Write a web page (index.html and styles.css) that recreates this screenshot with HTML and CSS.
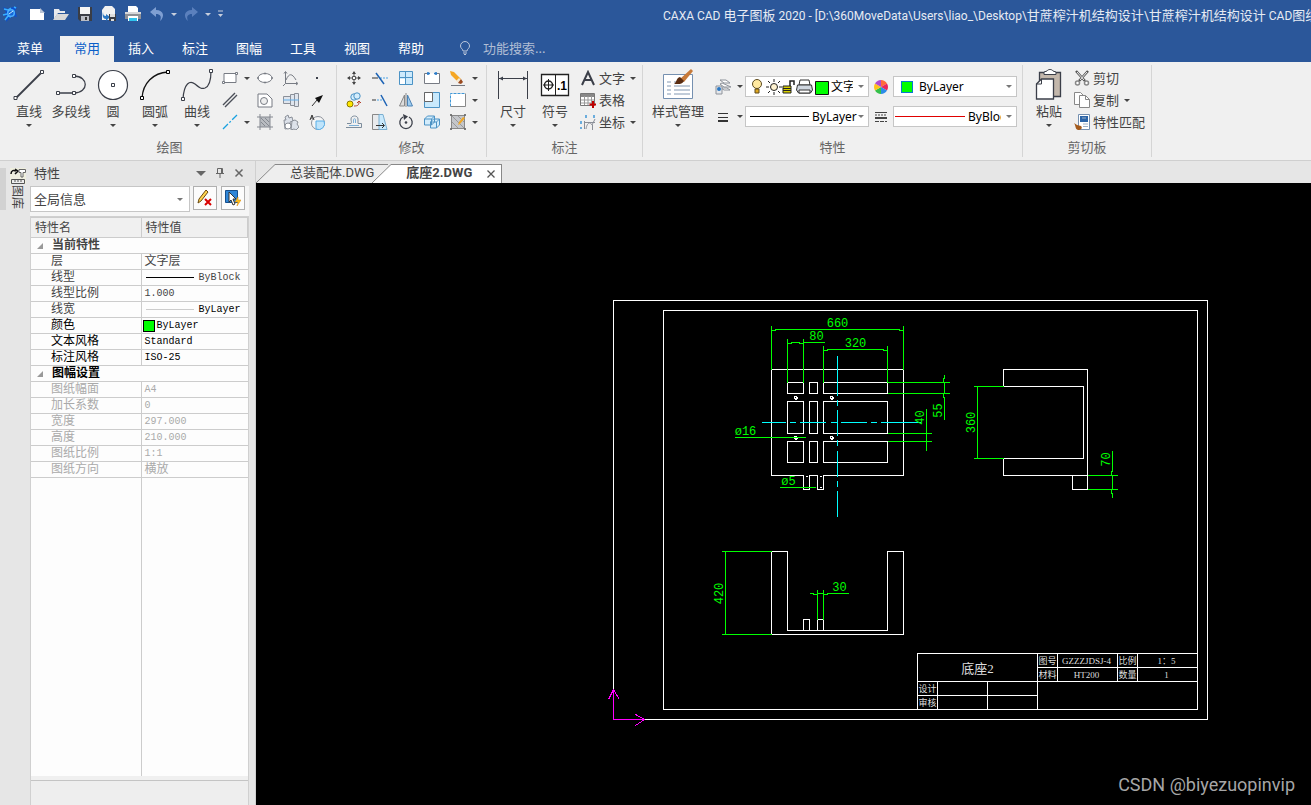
FILE: index.html
```html
<!DOCTYPE html>
<html lang="zh-CN">
<head>
    <meta charset="UTF-8">
    <meta name="viewport" content="width=device-width, initial-scale=1.0">
    <title>CAXA CAD 电子图板 2020</title>
    <link rel="stylesheet" href="styles.css">
</head>
<body>
    <header class="titlebar">
        <div class="quick">
            <svg class="ic logo" viewBox="0 0 16 16"><path d="M1 1l5 2 5-2 4 0-2 4 2 6-4-1-3 2-4 4 1-5-3-2 2-3z" fill="#0a4fd0"/><path d="M2 3l4 1 3-2M1 9l4-1M3 14l3-4 3 1M12 1l2 1" stroke="#39b0ff" stroke-width="1.500" fill="none"/><circle cx="9" cy="7" r="3.300" fill="#1668d8" stroke="#4cb0ff" stroke-width="1.500"/><path d="M7 8l4-3" stroke="#cdeeff" fill="none"/></svg>
            <button aria-label="新建"><svg class="ic" viewBox="0 0 16 16"><path d="M1 3h10l4 4v7H1z" fill="#fff"/><path d="M11 2v5h5z" fill="#b9c4d6"/></svg></button>
            <button aria-label="打开"><svg class="ic" viewBox="0 0 16 16"><path d="M1 13V3h5l1 2h5v2H5z" fill="#e8eaee"/><path d="M4 8h12l-4 6H0z" fill="#d8d8d8"/></svg></button>
            <button aria-label="保存"><svg class="ic" viewBox="0 0 16 16"><path d="M1 1h14v14H3l-2-2z" fill="#3a3d45"/><path d="M3 1h10v7H3z" fill="#f4f4f4"/><path d="M4 10h8v5H4z" fill="#b9bcc4"/><path d="M8 11h2v3H8z" fill="#333"/></svg></button>
            <button aria-label="另存为"><svg class="ic" viewBox="0 0 16 16"><path d="M4 0h7l3 3v11H1V4z" fill="#f1f1f1"/><path d="M2 6c0 3 1 4 3 4V8l4 3-4 4v-2c-3 0-4-3-3-7z" fill="#2b78c4"/><path d="M8 8h7v7H8z" fill="#3a3d45"/><path d="M9 8h5v3H9zM10 13h3v2h-3z" fill="#ddd"/></svg></button>
            <button aria-label="打印"><svg class="ic" viewBox="0 0 16 16"><path d="M3 0h8l2 2v4H3z" fill="#fff"/><path d="M0 6h16v7H0z" fill="#8d9096"/><path d="M0 6h16v2H0z" fill="#d6d7da"/><path d="M3 10h10v5H3z" fill="#fff"/><path d="M4 12h8v3H4z" fill="#2fc3ee"/></svg></button>
            <button aria-label="撤销"><svg class="ic" viewBox="0 0 16 16"><path d="M1 6l6-5v3c8 0 9 7 4 11 2-5 0-7-4-7v3z" fill="#7f9fd2"/></svg></button>
            <i class="caret light"></i>
            <button aria-label="重做"><svg class="ic" viewBox="0 0 16 16"><path d="M15 6L9 1v3c-8 0-9 7-4 11-2-5 0-7 4-7v3z" fill="#5b80bd"/></svg></button>
            <i class="caret light"></i>
            <svg class="more" viewBox="0 0 7 8"><path d="M1 1h5" stroke="#c8cfdd" stroke-width="1"/><path d="M1 4h5L3.500 7z" fill="#c8cfdd"/></svg>
        </div>
        <div class="app-title">CAXA CAD <span>电子图板</span> 2020 - [D:\360MoveData\Users\liao_\Desktop\<span>甘蔗榨汁机结构设计</span>\<span>甘蔗榨汁机结构设计</span> CAD<span>图纸</span></div>
    </header>
    <nav class="menu">
        <button class="first">菜单</button>
        <button class="active">常用</button>
        <button>插入</button>
        <button>标注</button>
        <button>图幅</button>
        <button>工具</button>
        <button>视图</button>
        <button>帮助</button>
        <label class="search">
            <svg viewBox="0 0 12 14"><path d="M4 10C4 8 1.500 7.500 1.500 5a4.500 4.500 0 0 1 9 0C10.500 7.500 8 8 8 10zM4 12h4M5 13.500h2" fill="none" stroke="#bcc8dc"/></svg>
            <input type="text" placeholder="功能搜索..." aria-label="功能搜索">
        </label>
    </nav>

    <section class="ribbon">
        <!-- draw -->
        <div class="group">
            <div class="tools">
                <button class="big"><svg viewBox="0 0 32 32"><path d="M3 29L29 3" stroke="#3b3f49" stroke-width="1.800"/><path class="node" d="M1 27.500h3v3H1zM27.500 1.500h3v3h-3z"/></svg>直线<i class="caret"></i></button>
                <button class="big"><svg viewBox="0 0 32 32"><path d="M3 24h16c15 0 15-17 0-17" fill="none" stroke="#3b3f49" stroke-width="1.300"/><path class="node" d="M1.500 22.500h3v3h-3zM17.500 22.500h3v3h-3zM17.500 5.500h3v3h-3z"/></svg>多段线</button>
                <button class="big"><svg viewBox="0 0 32 32"><circle cx="16" cy="16" r="14.500" fill="#fff" stroke="#3b3f49" stroke-width="1.200"/><path class="node" d="M14.500 14.500h3v3h-3z"/></svg>圆<i class="caret"></i></button>
                <button class="big"><svg viewBox="0 0 32 32"><path d="M3 29C4 14 14 4 29 3" fill="none" stroke="#111" stroke-width="1.300"/><path class="node black" d="M1.500 27.500h3v3h-3zM27.500 1.500h3v3h-3z"/></svg>圆弧<i class="caret"></i></button>
                <button class="big"><svg viewBox="0 0 32 32"><path d="M2 30C3 14 9 11 14 15c6 5 7 5 10 4 5-2 6-8 6-17" fill="none" stroke="#3b3f49" stroke-width="1.200"/><path class="node" d="M.5 28.500h3v3h-3zM28.500.5h3v3h-3z"/></svg>曲线<i class="caret"></i></button>
                <div class="grid draw-grid">
                    <button aria-label="矩形"><svg class="ic" viewBox="0 0 16 16"><path d="M2 3.500h12v9H2z" fill="#fff" stroke="#777b83"/><path d="M.5 11.500h2v2h-2zM13.500 2.500h2v2h-2z" fill="#fff" stroke="#777b83"/></svg><i class="caret"></i></button>
                    <button aria-label="椭圆"><svg class="ic" viewBox="0 0 16 16"><ellipse cx="8" cy="8" rx="7" ry="4.500" fill="#fff" stroke="#777b83"/><path d="M.5 7.500h1v1h-1zM14.500 7.500h1v1h-1zM7.500 3h1v1h-1zM7.500 12h1v1h-1z" fill="#fff" stroke="#777b83"/></svg></button>
                    <button aria-label="公式曲线"><svg class="ic" viewBox="0 0 16 16"><path d="M2.500 2v11.500H14M1 3.500l1.500-2L4 3.500M13 12l2 1.500-2 1.500M0 16l2.500-2.500M3 10C6 3 9 3 13 10" fill="none" stroke="#777b83"/></svg></button>
                    <button aria-label="点"><svg class="ic" viewBox="0 0 16 16"><path d="M7 7h2v2H7z" fill="#3b3f49"/></svg></button>
                    <button aria-label="平行线"><svg class="ic" viewBox="0 0 16 16"><path d="M1 13L13 1M3 15L15 3" stroke="#4b4f59" stroke-width="1.400"/></svg></button>
                    <button aria-label="局部放大"><svg class="ic" viewBox="0 0 16 16"><path d="M1 2h9l5 5v8H1z" fill="#fff" stroke="#777b83"/><circle cx="7" cy="9" r="3.500" fill="#eee" stroke="#777b83"/></svg></button>
                    <button aria-label="孔轴"><svg class="ic" viewBox="0 0 16 16"><path d="M.5 4.500h7v7h-7zM7.500 2.500h4v11h-4zM11.500 1.500h4v13h-4z" fill="#dfe5ed" stroke="#8b9099"/><path d="M0 8h16" stroke="#62aee8"/></svg></button>
                    <button aria-label="箭头"><svg class="ic" viewBox="0 0 16 16"><path d="M3 14l5-6" stroke="#333"/><path d="M14 3L6 6l4 5z" fill="#111"/></svg></button>
                    <button aria-label="中心线"><svg class="ic" viewBox="0 0 16 16"><path d="M1 15L15 1" stroke="#19a1e0" stroke-width="1.300" stroke-dasharray="7 2 2 2"/></svg><i class="caret"></i></button>
                    <button aria-label="剖面线"><svg class="ic" viewBox="0 0 16 16"><path d="M3 3h10v10H3z" fill="#b9bcc1"/><path d="M3 0v16M13 0v16M0 3h16M0 13h16M4 8l4 4M4 4l8 8M8 4l4 4" stroke="#858991"/></svg></button>
                    <button aria-label="齿轮"><svg class="ic" viewBox="0 0 16 16"><path d="M1 6h2l-1-3 3-2 1 3 3-1 1 4-3 1 1 6-6 1z" fill="#dde2ea" stroke="#8b9099"/><path d="M9 7l3-1 3 2-1 2 2 3-3 3-2-1-3 1z" fill="#dde2ea" stroke="#8b9099"/><circle cx="5" cy="12" r="3" fill="#fff" stroke="#8b9099"/></svg></button>
                    <button aria-label="技术要求"><svg class="ic" viewBox="0 0 16 16"><circle cx="9" cy="9" r="6.500" fill="#f5f5f5" stroke="#8b9099"/><path d="M7 7h8a6 6 0 0 1-8 8z" fill="#bfe4fb" stroke="#58aee8"/><path d="M1 6l2-5 2 5M2 4h2" fill="none" stroke="#333"/></svg></button>
                </div>
            </div>
            <div class="group-name">绘图</div>
        </div>
        <!-- modify -->
        <div class="group">
            <div class="tools">
                <div class="grid modify-grid">
                    <button aria-label="平移"><svg class="ic" viewBox="0 0 16 16"><path d="M8 2v4M8 10v4M2 8h4M10 8h4" stroke="#555"/><path d="M6 4l2-3 2 3zM6 12l2 3 2-3zM4 6L1 8l3 2zM12 6l3 2-3 2z" fill="#444"/><path d="M6.500 6.500h3v3h-3z" fill="#fff" stroke="#555"/></svg></button>
                    <button aria-label="裁剪"><svg class="ic" viewBox="0 0 16 16"><path d="M0 8h6" stroke="#333"/><path d="M8 8h8" stroke="#4aa3e6" stroke-dasharray="2 1"/><path d="M4 3l8 11" stroke="#1b62b5" stroke-width="1.500"/></svg></button>
                    <button aria-label="阵列"><svg class="ic" viewBox="0 0 16 16"><path d="M1 1h14v14H1z" fill="#cdeafc"/><path d="M2 9h5v5H2z" fill="#fff"/><path d="M1.500 1.500h13v13h-13zM7.500 1v14M1 7.500h14" fill="none" stroke="#4c93c5"/></svg></button>
                    <button aria-label="打断"><svg class="ic" viewBox="0 0 16 16"><path d="M3 3.500H.5v10h15v-10H13" fill="#fff" stroke="#777b83"/><path d="M4 2v3M6 3.500H3M12 2v3M10 3.500h3" stroke="#2b7cc9" stroke-width="1.500"/></svg></button>
                    <button aria-label="删除"><svg class="ic" viewBox="0 0 16 16"><path d="M0 1l4 1 7 7-3 3-7-7z" fill="#f5a623"/><path d="M9 8l4 4-3 2-4-3z" fill="#f3e6d2"/><path d="M11 9l2 3-2 2-3-1z" fill="#9a4a20"/><path d="M1 15.500h14" stroke="#777b83"/></svg><i class="caret"></i></button>
                    <button aria-label="复制平移"><svg class="ic" viewBox="0 0 16 16"><circle cx="4" cy="12" r="3" fill="#ffe600" stroke="#8a7a00"/><circle cx="8" cy="5" r="3.200" fill="#d4edfc" stroke="#4c93c5"/><circle cx="11" cy="4" r="3.200" fill="#d4edfc" stroke="#4c93c5"/><path d="M8 14c4 0 5-1 5-4M11 11l2-2 2 2" fill="none" stroke="#b2432f"/></svg></button>
                    <button aria-label="延伸"><svg class="ic" viewBox="0 0 16 16"><path d="M0 8h4" stroke="#333"/><path d="M5 8h6" stroke="#4aa3e6" stroke-dasharray="2 1"/><path d="M9 3l6 11" stroke="#1b62b5" stroke-width="1.500"/></svg></button>
                    <button aria-label="镜像"><svg class="ic" viewBox="0 0 16 16"><path d="M6.500 3v11H1.500z" fill="#ddd" stroke="#888"/><path d="M9.500 3v11h5z" fill="#9fcdf0" stroke="#4c83b5"/><path d="M8 1v14" stroke="#888"/></svg></button>
                    <button aria-label="缩放"><svg class="ic" viewBox="0 0 16 16"><path d="M.5.5h15v15H.5z" fill="#c9e9fc" stroke="#4c93c5"/><path d="M.5.5h8v9h-8z" fill="#fff" stroke="#666"/></svg></button>
                    <button aria-label="拉伸"><svg class="ic" viewBox="0 0 16 16"><path d="M.5 1.500h15v13H.5z" fill="#fff"/><path d="M.5 14.500v-13h15" fill="none" stroke="#3f97d6" stroke-dasharray="3 1"/><path d="M.5 14.500h15v-13" fill="none" stroke="#888"/></svg><i class="caret"></i></button>
                    <button aria-label="等距线"><svg class="ic" viewBox="0 0 16 16"><path d="M0 13.500h15.500v-4H12V5c0-4-7-4-7 0 0 2 1 3 0 4.500H1" fill="none" stroke="#7c8c9b"/><path d="M3 11.500h10M9.500 9V5.500c0-1-2-1-2 0V9" fill="none" stroke="#7cb0d8"/></svg></button>
                    <button aria-label="拉伸图形"><svg class="ic" viewBox="0 0 16 16"><path d="M.5.500h10v15H.5z" fill="#e8eaec" stroke="#888"/><path d="M7 .5h4l4 15H7z" fill="#c9e9fc" stroke="#79aed0"/><path d="M4 11.500h8M10 9l2.500 2.500L10 14" fill="none" stroke="#333"/></svg></button>
                    <button aria-label="旋转"><svg class="ic" viewBox="0 0 16 16"><path d="M5 3a6.200 6.200 0 1 0 6 0" fill="none" stroke="#3b3f49" stroke-width="1.300"/><path d="M5 0l5 2.500L6 6z" fill="#3b3f49"/><circle cx="8" cy="8.500" r="1.300" fill="#3b3f49"/></svg></button>
                    <button aria-label="块"><svg class="ic" viewBox="0 0 16 16"><path d="M.5 5l3-3h7v6l-3 3h-7zM6.500 8l3-3h6v6l-3 3h-6z" fill="#d4edfc" stroke="#4c93c5"/><path d="M.5 5h7v6M7.500 5l3-3M6.500 8h6v6M12.500 8l3-3" fill="none" stroke="#4c93c5"/></svg></button>
                    <button aria-label="编辑填充"><svg class="ic" viewBox="0 0 16 16"><path d="M1.500 1.500h13v13h-13z" fill="#c4c6ca" stroke="#888"/><path d="M2 8l6 6M2 2l12 12M8 2l6 6" stroke="#999"/><path d="M.5.5h1v1h-1zM14.500.5h1v1h-1zM.5 14.500h1v1h-1zM14.500 14.500h1v1h-1z" fill="#fff" stroke="#555"/><path d="M15 4l-5 6-2 1 1-3 4-5z" fill="#f0a828"/></svg><i class="caret"></i></button>
                </div>
            </div>
            <div class="group-name">修改</div>
        </div>
        <!-- annotate -->
        <div class="group">
            <div class="tools">
                <button class="big"><svg viewBox="0 0 32 32"><path d="M1.500 2v28M30.500 2v28" stroke="#3b3f49"/><path d="M2 9.500h28" stroke="#3b3f49"/><path d="M2 9.500l4-2v4zM30 9.500l-4-2v4z" fill="#3b3f49"/></svg>尺寸<i class="caret"></i></button>
                <button class="big"><svg viewBox="0 0 32 32"><path d="M2.500 5.500h27v21h-27z" fill="#fff" stroke="#222" stroke-width="1.300"/><path d="M16.500 5v22M4 16h11M9.500 10v12" stroke="#222"/><circle cx="9.500" cy="16" r="4" fill="none" stroke="#222" stroke-width="1.500"/><text x="18" y="21" font-size="12" font-weight="700">.1</text></svg>符号<i class="caret"></i></button>
                <div class="list">
                    <button><svg class="ic" viewBox="0 0 16 16"><path d="M2 15L8 2l6 13M4.500 10h7" fill="none" stroke="#3b3f49" stroke-width="2"/></svg>文字<i class="caret"></i></button>
                    <button><svg class="ic" viewBox="0 0 16 16"><path d="M.5 1.500h14v12H.5z" fill="#fff" stroke="#777"/><path d="M1 2h13v3H1z" fill="#888"/><path d="M1 8h13M1 11h13M4.500 4v9M8 4v9M11.500 4v9" stroke="#999"/><path d="M13 9v7M9.500 12.500h7" stroke="#c00000" stroke-width="2"/></svg>表格</button>
                    <button><svg class="ic" viewBox="0 0 16 16"><path d="M4.500 7v8M4 8.500h11M6 15c1-6 4-8 6-4l3-6M12.500 11v5" fill="none" stroke="#8a8f98"/><path d="M1 7v3M6 1v3M14 1v3M1 13v2" stroke="#3f97d6" stroke-width="1.500"/></svg>坐标<i class="caret"></i></button>
                </div>
            </div>
            <div class="group-name">标注</div>
        </div>
        <!-- properties -->
        <div class="group">
            <div class="tools">
                <button class="big wide"><svg viewBox="0 0 32 32"><path d="M1.500 5.500h29v24h-29z" fill="#fff" stroke="#7590b0"/><path d="M5 13h4M5 17h4M5 21h4M5 25h4M12 13h6M12 17h16M12 21h16M12 25h16" stroke="#8298b2"/><path d="M29 0l2 2-9 11-4-3z" fill="#c77a3a"/><path d="M18 8l4 4c-2 4-6 3-10 3 3-2 2-6 6-7z" fill="#5a2d12"/></svg>样式管理<i class="caret"></i></button>
                <div class="props">
                    <button class="mini" aria-label="图层"><svg class="ic" viewBox="0 0 16 16"><path d="M5 1h6l4 3H9zM5 5l2-1 9 4H9zM6 9h6l3 2H9z" fill="#fff" stroke="#8d929a"/><path d="M1 7h6v8H1z" fill="#e5e8ec" stroke="#8d929a"/><circle cx="4" cy="10" r="2" fill="#2b78c4"/></svg><i class="caret"></i></button>
                    <div class="combo clipped">
                        <svg class="layer-icons" viewBox="0 0 80 18"><circle cx="7" cy="6" r="4.500" fill="#ffe9a0" stroke="#5c4a20"/><path d="M5 11h4v4H5z" fill="#e0a820" stroke="#5c4a20"/><circle cx="24" cy="9" r="3.500" fill="#fff3d0" stroke="#222"/><path d="M24 1v3M24 14v3M16 9h3M29 9h3M18 3l2 2M28 13l2 2M30 3l-2 2M20 13l-2 2" stroke="#222"/><path d="M33 8h8v7h-8z" fill="#d8cf00" stroke="#222"/><path d="M33 10.500h8M33 12.500h8" stroke="#222"/><path d="M40 8V3h4v4" fill="none" stroke="#222" stroke-width="1.500"/><path d="M50 2h9l1 5H49z" fill="#fff" stroke="#333"/><path d="M47.500 7h14l1 5-2 3h-12l-2-3z" fill="#cfd6df" stroke="#333"/><path d="M49 12h11v3H49z" fill="#fff" stroke="#333"/><path d="M65.500 3.500h13v13h-13z" fill="#0f0" stroke="#111"/></svg>
                        <select aria-label="当前图层"><option>文字层</option></select>
                        <i class="caret grey"></i>
                    </div>
                    <button class="mini" aria-label="颜色"><svg class="ic" viewBox="0 0 16 16"><path d="M8 8V1a7 7 0 0 1 6 3.500z" fill="#ff6a3a"/><path d="M8 8l6-3.500a7 7 0 0 1 0 7z" fill="#e8285a"/><path d="M8 8l6 3.500A7 7 0 0 1 8 15z" fill="#2c8de8"/><path d="M8 8v7a7 7 0 0 1-6-3.500z" fill="#35c04a"/><path d="M8 8l-6 3.500a7 7 0 0 1 0-7z" fill="#ffc21a"/><path d="M8 8L2 4.500A7 7 0 0 1 8 1z" fill="#b04ad0"/></svg></button>
                    <div class="combo">
                        <span class="swatch"></span>
                        <select aria-label="颜色"><option>ByLayer</option></select>
                        <i class="caret grey"></i>
                    </div>
                    <button class="mini" aria-label="线宽"><svg class="ic" viewBox="0 0 16 16"><path d="M3 4.500h10M3 8.500h10" stroke="#333"/><path d="M3 12h10" stroke="#333" stroke-width="2"/></svg><i class="caret"></i></button>
                    <div class="combo">
                        <span class="sample black"></span>
                        <select aria-label="线宽"><option>ByLayer</option></select>
                        <i class="caret grey"></i>
                    </div>
                    <button class="mini" aria-label="线型"><svg class="ic" viewBox="0 0 16 16"><path d="M2 3.500h12" stroke="#444"/><path d="M2 6h12" stroke="#444" stroke-dasharray="2 1"/><path d="M2 9h12" stroke="#444" stroke-width="2"/><path d="M2 12.500h12" stroke="#444" stroke-dasharray="4 1"/></svg></button>
                    <div class="combo clipped">
                        <span class="sample red"></span>
                        <select aria-label="线型"><option>ByBlock</option></select>
                        <i class="caret grey"></i>
                    </div>
                </div>
            </div>
            <div class="group-name">特性</div>
        </div>
        <!-- clipboard -->
        <div class="group">
            <div class="tools">
                <button class="big"><svg viewBox="0 0 32 32"><path d="M6.500 3.500h21v24h-21z" fill="#c3b7ab" stroke="#3b3f49" stroke-width="1.300"/><path d="M11 5.500V3l3-1c1-2 5-2 6 0l3 1v2.500z" fill="#fff" stroke="#3b3f49"/><path d="M3.500 15l5-5h12v20h-17z" fill="#fff" stroke="#3b3f49" stroke-width="1.300"/><path d="M3.500 15h5v-5" fill="none" stroke="#3b3f49"/></svg>粘贴<i class="caret"></i></button>
                <div class="list">
                    <button><svg class="ic" viewBox="0 0 16 16"><path d="M2 1l9 10M14 1L5 11" stroke="#555" stroke-width="2.500"/><path d="M3 2l7 8M13 2l-7 8" stroke="#eee"/><circle cx="3.500" cy="13" r="2" fill="#fff" stroke="#888" stroke-width="1.500"/><circle cx="12.500" cy="13" r="2" fill="#fff" stroke="#888" stroke-width="1.500"/></svg>剪切</button>
                    <button><svg class="ic" viewBox="0 0 16 16"><path d="M.5.5h6l3 3v9h-9z" fill="#fff" stroke="#888"/><path d="M5.500 3.500h6l4 4v8h-10z" fill="#fff" stroke="#888"/><path d="M11.500 3.500v4h4" fill="none" stroke="#888"/></svg>复制<i class="caret"></i></button>
                    <button><svg class="ic" viewBox="0 0 16 16"><path d="M4.500.5h11v15h-11z" fill="#fff" stroke="#7590b0"/><path d="M6 2h8v6H6z" fill="#2b64a8"/><path d="M9 10h5M9 12.500h5M8 4h4" stroke="#9db0c6"/><path d="M0 9l3 2 4 1c2 2 0 4-3 4-3-1-2-4-4-7z" fill="#a35a1c"/></svg>特性匹配</button>
                </div>
            </div>
            <div class="group-name">剪切板</div>
        </div>
    </section>

    <main class="workspace">
        <aside class="rail">
            <div class="rail-edge"></div>
            <button class="rail-tab"><svg viewBox="0 0 16 16"><path d="M1 6c0-4 3-4 5-3M5 1l3 2-3 3" fill="none" stroke="#111" stroke-width="1.500"/><path d="M9 1.500h6.500v3H13V9h-2V4.500H9z" fill="#fff" stroke="#666"/><path d="M1.500 11.500h13v4h-13z" fill="#eee" stroke="#555"/><path d="M5 12v2M8 12v2M11 12v2" stroke="#555"/></svg><span>图库</span></button>
        </aside>

        <section class="panel">
            <div class="panel-title">
                <span>特性</span>
                <svg viewBox="0 0 12 12"><path d="M1 4h10L6 9z" fill="#666"/></svg>
                <svg viewBox="0 0 12 12"><path d="M3.500 1.500h5v5h-5zM7.500 1v5M2 6.500h8M6 7v4" fill="none" stroke="#666"/></svg>
                <svg viewBox="0 0 12 12"><path d="M2.500 2.500l7 7M9.500 2.500l-7 7" stroke="#666" stroke-width="1.500"/></svg>
            </div>
            <div class="panel-pick">
                <div class="combo tall">
                    <select aria-label="选择对象"><option>全局信息</option></select>
                    <i class="caret grey"></i>
                </div>
                <button class="tool" aria-label="清除选择"><svg viewBox="0 0 16 16"><path d="M9 0l2 2-7 9-3 2 1-4z" fill="#ffd34d" stroke="#6b4a10"/><path d="M8 9l6 6M14 9l-6 6" stroke="#d80000" stroke-width="2"/></svg></button>
                <button class="tool" aria-label="快速选择"><svg viewBox="0 0 16 16"><path d="M.5.5h12v12H.5z" fill="#2f86d8" stroke="#174f8c"/><path d="M4 2l7 7H8l2 5-2 1-2-5-2 2z" fill="#fff" stroke="#333"/><path d="M13 7l-3 5h3l-1 4 4-6h-3z" fill="#ffc31e" stroke="#d98200" stroke-width=".5"/></svg></button>
            </div>
            <div class="props-box">
                <table class="props-table">
                    <thead><tr><th>特性名</th><th>特性值</th></tr></thead>
                    <tbody>
                        <tr class="section"><td colspan="2">当前特性</td></tr>
                        <tr><td>层</td><td>文字层</td></tr>
                        <tr><td>线型</td><td class="mono"><span class="line-value"><i></i>ByBlock</span></td></tr>
                        <tr><td>线型比例</td><td class="mono">1.000</td></tr>
                        <tr><td>线宽</td><td class="mono"><span class="line-value thin"><i></i>ByLayer</span></td></tr>
                        <tr class="dark"><td>颜色</td><td class="mono"><span class="color-value"><i></i>ByLayer</span></td></tr>
                        <tr class="dark"><td>文本风格</td><td class="mono">Standard</td></tr>
                        <tr class="dark"><td>标注风格</td><td class="mono">ISO-25</td></tr>
                        <tr class="section dark"><td colspan="2">图幅设置</td></tr>
                        <tr class="off"><td>图纸幅面</td><td class="mono">A4</td></tr>
                        <tr class="off"><td>加长系数</td><td class="mono">0</td></tr>
                        <tr class="off"><td>宽度</td><td class="mono">297.000</td></tr>
                        <tr class="off"><td>高度</td><td class="mono">210.000</td></tr>
                        <tr class="off"><td>图纸比例</td><td class="mono">1:1</td></tr>
                        <tr class="off"><td>图纸方向</td><td>横放</td></tr>
                    </tbody>
                </table>
                <div class="props-empty"></div>
                <div class="props-hint"></div>
            </div>
        </section>

        <section class="document">
            <div class="doc-tabs">
                <div class="doc-tab">
                    <svg viewBox="0 0 20 19"><path d="M0 19L19 .5H20V19z" fill="#eee"/><path d="M0 19L19 .5H20" fill="none" stroke="#888"/></svg>
                    <button>总装配体.DWG</button>
                </div>
                <div class="doc-tab current">
                    <svg viewBox="0 0 20 19"><path d="M0 19L19 .5H20V19z" fill="#fff"/><path d="M0 19L19 .5H20" fill="none" stroke="#888"/></svg>
                    <button>底座2.DWG</button>
                    <button class="close" aria-label="关闭"><svg viewBox="0 0 10 10"><path d="M1.500 1.500l7 7M8.500 1.500l-7 7" stroke="#555" stroke-width="1.300"/></svg></button>
                </div>
            </div>
            <div class="canvas">
                <svg class="drawing" aria-label="底座2">
                    <g transform="translate(-255.500 -182.500)">
                        <!-- sheet frame -->
                        <path class="w" d="M613 300H1207V719H613zM663 310H1197V709H663z"/>

                        <!-- top view -->
                        <path class="w" d="M771 369H903V475H823V489H817V475H809V489H803V475H771z"/>
                        <path class="w" d="M787 382h16v11h-16zM809 382h8v11h-8zM823 382h64v11h-64z"/>
                        <path class="w" d="M787 401h16v32h-16zM809 401h8v32h-8zM823 401h64v32h-64z"/>
                        <path class="w" d="M787 441h16v21h-16zM809 441h8v21h-8zM823 441h64v21h-64z"/>
                        <path class="w" d="M805 476h2M819 476h2M805 487h2M819 487h2M794 396h2l1 2-2 1-1-2zM830 396h2l1 2-2 1-1-2zM794 436h2l1 2-2 1-1-2zM830 436h2l1 2-2 1-1-2z"/>
                        <path class="c" d="M761 422h24M789 422h6M799 422h26M830 422h6M840 422h26M870 422h6M880 422h40"/>
                        <path class="c" d="M837 355v40M837 399v6M837 409v26M837 439v6M837 450v26M837 480v6M837 490v26"/>
                        <path class="g" d="M771 325v44M903 325v44M771 330h4v-1h124v1h4"/>
                        <path class="g" d="M787 338v44M803 338v44M787 343h4v-1h8v1h4M803 342h21"/>
                        <path class="g" d="M823 345v37M887 345v37M823 350h4v-1h56v1h4"/>
                        <path class="g" d="M887 382h62M887 393h62M944 374v4h-1v4h1v11h-1v4h1v22"/>
                        <path class="g" d="M887 433h44M887 441h44M926 408v42M734 437h71M779 487h36"/>
                        <text x="837" y="326">660</text>
                        <text x="816" y="339">80</text>
                        <text x="855" y="346">320</text>
                        <text x="745" y="434">ø16</text>
                        <text x="788" y="484">ø5</text>
                        <text transform="translate(941 410) rotate(-90)">55</text>
                        <text transform="translate(923 417) rotate(-90)">40</text>

                        <!-- side view -->
                        <path class="w" d="M1003 386V369H1087V489H1072V475M1087 475H1003V458M1003 386H1083V458H1003"/>
                        <path class="g" d="M973 386h30M973 458h30M977 386v72M1087 475h30M1087 489h30M1112 450v21h-1v4h1v14h-1v4h1v4"/>
                        <text transform="translate(974 422) rotate(-90)">360</text>
                        <text transform="translate(1109 459) rotate(-90)">70</text>

                        <!-- front view -->
                        <path class="w" d="M771 551H787V630H887V551H903V634H771zM803 630V619H809V630M817 630V619H823V630"/>
                        <path class="g" d="M721 551h50M721 634h50M725 551v83M817 589v30M823 589v30M809 593h4v1h4v-1h6v1h4v-1h21"/>
                        <text x="839" y="590">30</text>
                        <text transform="translate(722 593) rotate(-90)">420</text>

                        <!-- title block -->
                        <path class="w" d="M917 709V653H1197M1037 653V709M917 681H1197M1037 667H1197M917 695H1037M937 681V709M987 681V709M1057 653V681M1117 653V681M1137 653V681"/>
                        <text class="t name" x="977" y="672">底座2</text>
                        <text class="t" x="1047" y="663">图号</text>
                        <text class="t" x="1086" y="663">GZZZJDSJ-4</text>
                        <text class="t" x="1127" y="663">比例</text>
                        <text class="t" x="1166" y="663">1：5</text>
                        <text class="t" x="1047" y="677">材料</text>
                        <text class="t" x="1086" y="677">HT200</text>
                        <text class="t" x="1127" y="677">数量</text>
                        <text class="t" x="1166" y="677">1</text>
                        <text class="t" x="927" y="691">设计</text>
                        <text class="t" x="927" y="705">审核</text>

                        <!-- origin -->
                        <path class="m" d="M613 689V719H643M608 699l5-10 6 10M635 714l9 5-9 6"/>
                    </g>
                </svg>
                <div class="watermark">CSDN @biyezuopinvip</div>
            </div>
        </section>
    </main>
</body>
</html>
```

FILE: styles.css
```css
* {
    box-sizing: border-box;
}

body {
    margin: 0;
    height: 100vh;
    display: flex;
    flex-direction: column;
    overflow: hidden;
    background: #e6e6e6;
    color: #444;
    font-family: "Noto Sans", "Noto Sans CJK SC", sans-serif;
    font-size: 13px;
    line-height: 18px;
}

button {
    margin: 0;
    padding: 0;
    border: 0;
    background: none;
    color: inherit;
    font: inherit;
    cursor: pointer;
}

svg {
    display: block;
    flex: none;
}

.ic {
    width: 16px;
    height: 16px;
}

.node {
    fill: #fff;
    stroke: #3b3f49;
}

.node.black {
    stroke: #000;
}

.caret {
    width: 0;
    height: 0;
    border: 3px solid transparent;
    border-top-color: #444;
    border-bottom-width: 0;
}

.caret.light {
    border-top-color: #c8cfdd;
}

.caret.grey {
    border-top-color: #777;
}

/* title bar */
.titlebar {
    display: flex;
    height: 36px;
    background: #2b579a;
    color: #e6ebf3;
}

.quick {
    display: flex;
    align-items: center;
    gap: 8px;
    flex: 1;
    height: 28px;
    padding-left: 2px;
}

.quick .logo {
    margin-right: 3px;
}

.quick .caret {
    margin: 0 -2px;
}

.quick .more {
    width: 7px;
    height: 8px;
}

.app-title {
    width: 648px;
    padding-top: 7px;
    overflow: hidden;
    white-space: nowrap;
    font-family: Roboto, "Noto Sans CJK SC", sans-serif;
    font-size: 12px;
}

.app-title span {
    font-size: 13px;
}

/* menu */
.menu {
    display: flex;
    height: 26px;
    background: #2b579a;
    color: #fff;
}

.menu button {
    width: 54px;
    padding-bottom: 2px;
}

.menu .first {
    width: 60px;
}

.menu .active {
    background: #f0f0f0;
    color: #0a5fc9;
}

.search {
    display: flex;
    align-items: center;
    gap: 12px;
    padding: 0 0 2px 21px;
}

.search svg {
    width: 12px;
    height: 14px;
}

.search input {
    width: 120px;
    padding: 0;
    border: 0;
    outline: 0;
    background: none;
    color: #fff;
    font: inherit;
}

.search input::placeholder {
    color: #b0bdd4;
    opacity: 1;
}

/* ribbon */
.ribbon {
    display: flex;
    height: 99px;
    padding: 3px 0;
    background: #f0f0f0;
    border-bottom: 1px solid #cfcfcf;
}

.group {
    display: flex;
    flex-direction: column;
    justify-content: space-between;
    padding: 2px 5px 0;
    border-right: 1px solid #d5d5d5;
}

.group:first-child {
    padding-left: 8px;
}

.tools {
    display: flex;
}

.group-name {
    padding-bottom: 1px;
    text-align: center;
    color: #666;
}

.big {
    display: flex;
    flex-direction: column;
    align-items: center;
    width: 42px;
    padding-top: 2px;
}

.big.wide {
    width: 60px;
}

.big svg {
    width: 32px;
    height: 32px;
    font-family: "Liberation Sans", sans-serif;
    margin-bottom: 1px;
}

.big .caret {
    margin-top: 4px;
}

.grid {
    display: grid;
    grid-auto-rows: 22px;
    align-content: start;
    margin-left: 4px;
}

.grid button {
    display: flex;
    align-items: center;
    gap: 6px;
}

.draw-grid {
    grid-template-columns: 35px 26px 26px 22px;
}

.modify-grid {
    grid-template-columns: 26px 26px 26px 26px 31px;
}

.list {
    display: grid;
    grid-auto-rows: 22px;
    align-content: start;
    margin-left: 4px;
    padding-right: 1px;
}

.list button {
    display: flex;
    align-items: center;
    gap: 3px;
}

.list .caret {
    margin-left: 2px;
}

.props {
    display: grid;
    grid-template-columns: 32px 124px 24px 124px;
    align-items: center;
    align-content: start;
    row-gap: 9px;
    padding: 9px 0 0 5px;
}

.mini {
    display: flex;
    align-items: center;
    justify-content: center;
    gap: 6px;
}

.combo {
    display: flex;
    align-items: center;
    height: 21px;
    padding: 0 4px;
    border: 1px solid #c6c6c6;
    background: #fff;
    color: #000;
    font-size: 12px;
}

.combo select {
    flex: 1;
    min-width: 0;
    height: 100%;
    padding: 0;
    border: 0;
    outline: 0;
    appearance: none;
    background: none;
    color: inherit;
    font: inherit;
    text-overflow: clip;
}

.combo.clipped select {
    margin-right: 5px;
}

.layer-icons {
    width: 80px;
    height: 18px;
    margin-right: 1px;
}

.swatch {
    width: 12px;
    height: 12px;
    margin: 0 6px 0 3px;
    background: #0f0;
    border: 1px solid #0a78d0;
}

.sample {
    width: 59px;
    margin-right: 3px;
    border-top: 1px solid #000;
}

.sample.red {
    width: 70px;
    margin-left: -3px;
    border-color: #e00000;
}

/* workspace */
.workspace {
    display: flex;
    flex: 1;
    min-height: 0;
}

.rail {
    display: flex;
    align-items: flex-start;
    gap: 4px;
    width: 30px;
    padding-top: 7px;
}

.rail-edge {
    width: 6px;
    height: 42px;
    background: #d2d2d2;
}

.rail-tab svg {
    width: 16px;
    height: 16px;
    background: #efefdf;
}

.rail-tab span {
    display: block;
    width: 15px;
    margin-top: 1px;
    font-size: 12px;
    line-height: 15px;
    writing-mode: vertical-rl;
    text-orientation: sideways;
}

.panel {
    display: flex;
    flex-direction: column;
    width: 226px;
    padding-right: 6px;
    border-right: 1px solid #d0d0d0;
}

.panel-title {
    display: flex;
    align-items: center;
    gap: 7px;
    height: 25px;
    padding: 0 4px 2px;
}

.panel-title span {
    flex: 1;
}

.panel-title svg {
    width: 12px;
    height: 12px;
}

.panel-pick {
    display: flex;
    gap: 3px;
    padding-bottom: 4px;
    background: #f5f5f5;
}

.combo.tall {
    width: 160px;
    height: 26px;
    padding: 0 6px 0 3px;
    color: #444;
    font-size: 13px;
}

.tool {
    display: flex;
    align-items: center;
    justify-content: center;
    width: 24px;
    height: 24px;
    margin-right: 1px;
    border: 1px solid #b0b0b0;
    background: #fcfcfc;
}

.tool svg {
    width: 16px;
    height: 16px;
}

.props-box {
    display: flex;
    flex: 1;
    flex-direction: column;
    border: 1px solid #d0d0d0;
    border-bottom: 0;
    background: #fdfdfd;
}

.props-table {
    width: 100%;
    table-layout: fixed;
    border-collapse: collapse;
    font-family: "Liberation Serif", "Noto Sans CJK SC", serif;
    font-size: 12px;
    line-height: 15px;
}

.props-table th {
    height: 20px;
    padding: 1px 4px 0;
    border: 1px solid #ccc;
    border-left-width: 0;
    background: #f0f0f0;
    font-weight: 400;
    text-align: left;
}

.props-table th:first-child {
    width: 110px;
}

.props-table td {
    height: 16px;
    padding: 0 0 0 20px;
    border-bottom: 1px solid #ccc;
}

.props-table td + td {
    padding: 0 3px;
    border-left: 1px solid #ccc;
}

.props-table .mono {
    font-family: "Liberation Mono", monospace;
    font-size: 10px;
}

.section td {
    font-weight: 700;
}

.section td::before {
    content: "";
    display: inline-block;
    margin: 0 9px 0 -14px;
    border: 3px solid;
    border-color: transparent #999 #999 transparent;
}

.dark {
    color: #000;
}

.off {
    color: #aaa;
}

.line-value,
.color-value {
    display: flex;
    align-items: center;
}

.line-value i {
    width: 48px;
    margin: 0 5px 0 1px;
    border-top: 1px solid #000;
}

.line-value.thin {
    color: #000;
}

.line-value.thin i {
    border-color: #ccc;
}

.color-value i {
    width: 12px;
    height: 12px;
    margin: 0 2px 0 -2px;
    border: 1px solid #000;
    background: #0f0;
}

.props-empty {
    flex: 1;
    width: 111px;
    border-right: 1px solid #ccc;
}

.props-hint {
    height: 29px;
    border-top: 4px solid #f0f0f0;
    background: #eee;
    box-shadow: inset 0 1px #c4c4c4;
}

.document {
    display: flex;
    flex: 1;
    flex-direction: column;
    min-width: 0;
}

.doc-tabs {
    display: flex;
    align-items: flex-end;
    height: 22px;
    line-height: 16px;
}

.doc-tab {
    display: flex;
    height: 19px;
}

.doc-tab > svg {
    width: 20px;
    height: 19px;
}

.doc-tab > button {
    padding: 0 14px 2px;
    border-top: 1px solid #888;
    background: #eee;
    font-family: Roboto, "Noto Sans CJK SC", sans-serif;
}

.doc-tab.current {
    margin-left: -16px;
}

.doc-tab.current > button {
    background: #fff;
    font-weight: 700;
}

.doc-tab > .close {
    padding: 0 5px 0 0;
    border-right: 1px solid #888;
}

.close svg {
    width: 10px;
    height: 10px;
}

.canvas {
    position: relative;
    flex: 1;
    min-height: 0;
    background: #000;
}

.drawing {
    width: 100%;
    height: 100%;
}

.drawing path {
    fill: none;
    shape-rendering: crispEdges;
}

.drawing .w {
    stroke: #fff;
}

.drawing .g {
    stroke: #0f0;
}

.drawing .c {
    stroke: #0ff;
}

.drawing .m {
    stroke: #f0f;
}

.drawing text {
    fill: #0f0;
    font-family: "Liberation Mono", monospace;
    font-size: 12px;
    text-anchor: middle;
}

.drawing .t {
    fill: #ddd;
    font-family: "Liberation Serif", "Noto Sans CJK SC", serif;
    font-size: 9px;
}

.drawing .name {
    font-size: 13px;
}

.watermark {
    position: absolute;
    right: 16px;
    bottom: 8px;
    color: #a6a6a6;
    font-family: Roboto, sans-serif;
    font-size: 18px;
    line-height: 24px;
}
```
